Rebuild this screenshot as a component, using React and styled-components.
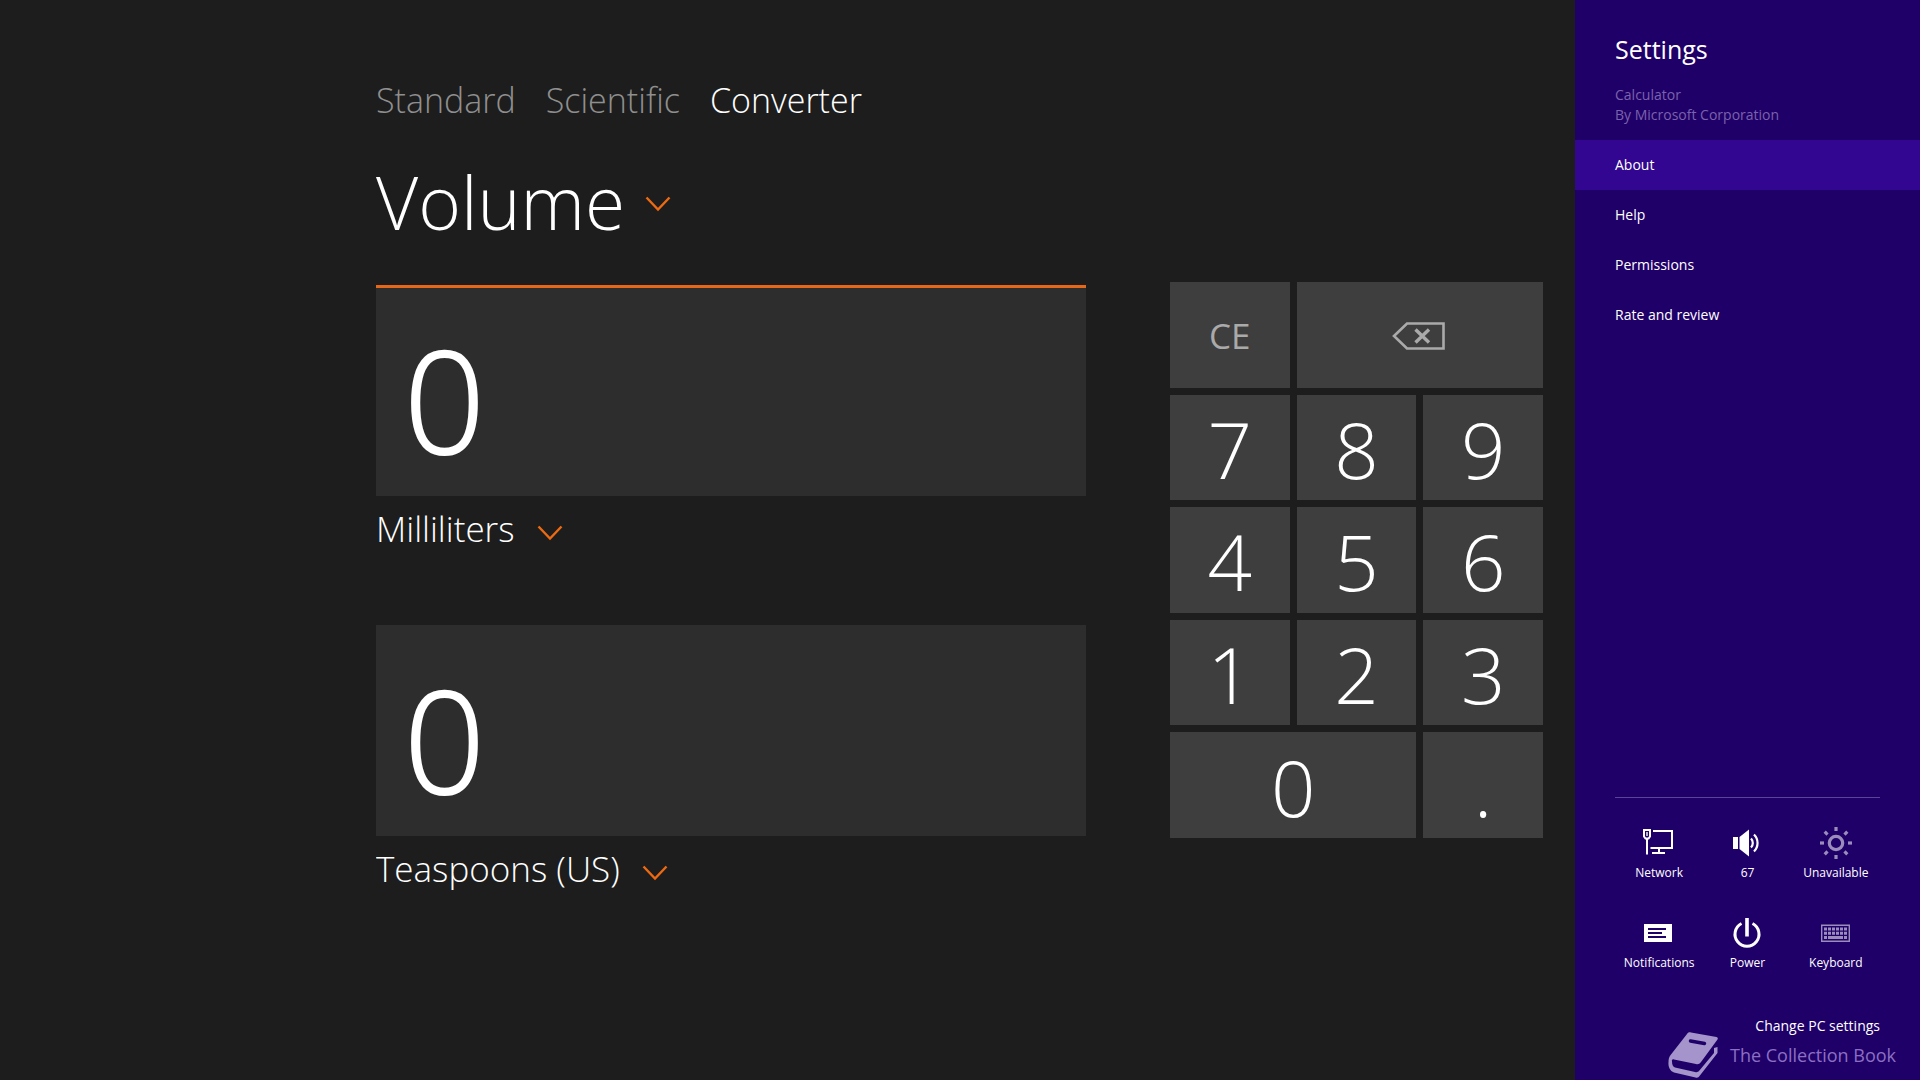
import React, { useState } from 'react'
import styled, { createGlobalStyle } from 'styled-components'

const GlobalStyle = createGlobalStyle`
  * {
    box-sizing: border-box;
  }
  body {
    margin: 0;
    background-color: #1d1d1d;
    color: #fff;
    font-family: "Open Sans", "Noto Sans", sans-serif;
  }
  button, input, select {
    font-family: inherit;
    color: inherit;
    border: none;
    border-radius: 0;
    outline: 0;
    padding: 0;
    margin: 0;
  }
`

const Page = styled.div`
  display: flex;
  min-height: 100vh;
`

const Main = styled.main`
  flex: 1;
  min-width: 0;
  padding: 76px 32px 40px 376px;
`

const Tabs = styled.nav`
  display: flex;
  gap: 30px;
  margin-bottom: 30px;
`

const Tab = styled.button`
  background: none;
  color: ${props => props.$active ? "#fff" : "#8f8f8f"};
  font-size: 34px;
  font-weight: 300;
  line-height: 48px;
  cursor: pointer;
`

const Picker = styled.label`
  display: flex;
  align-items: center;
  gap: ${props => props.$large ? "20px" : "22px"};
  height: ${props => props.$large ? "96px" : "66px"};
  svg {
    margin-top: ${props => props.$large ? "4px" : "8px"};
  }
`

const Select = styled.select`
  appearance: none;
  field-sizing: content;
  background: none;
  font-size: ${props => props.$large ? "73px" : "35px"};
  font-weight: 300;
  line-height: ${props => props.$large ? "96px" : "48px"};
  cursor: pointer;
  option {
    background-color: #2d2d2d;
    font-size: 20px;
  }
`

const Workspace = styled.div`
  display: flex;
  align-items: flex-start;
  gap: 84px;
  margin-top: 32px;
`

const Fields = styled.div`
  flex: 1;
  min-width: 0;
  padding-top: 3px;
`

const Field = styled.div`
  margin-bottom: 63px;
`

const Display = styled.input`
  display: block;
  width: 100%;
  height: 211px;
  padding: 14px 24px 0 28px;
  background-color: #2d2d2d;
  border-top: 3px solid ${props => props.$active ? "#e5671a" : "#2d2d2d"};
  font-size: 142px;
  font-weight: 300;
  -webkit-text-stroke: 2px #fff;
`

const Keypad = styled.div`
  display: grid;
  flex: none;
  width: 373px;
  height: 556px;
  grid-template-columns: repeat(3, 1fr);
  grid-template-rows: repeat(5, 1fr);
  gap: 7px;
`

const Key = styled.button`
  display: flex;
  align-items: center;
  justify-content: center;
  grid-column: span ${props => props.$span || 1};
  padding-top: 3px;
  background-color: #3e3e3e;
  color: ${props => props.$command ? "#aaa" : "#fff"};
  font-size: ${props => props.$command ? "35px" : "78px"};
  font-weight: ${props => props.$command ? 400 : 300};
  line-height: 96px;
  cursor: pointer;
`

const Panel = styled.aside`
  position: relative;
  display: flex;
  flex-direction: column;
  flex: none;
  width: 345px;
  padding-bottom: 42px;
  background-color: #1f0068;
`

const PanelTitle = styled.h1`
  margin: 30px 40px 17px;
  font-size: 25px;
  font-weight: 400;
  line-height: 38px;
`

const AppInfo = styled.p`
  margin: 0 40px 15px;
  color: #7b62ad;
  font-size: 14px;
  line-height: 20px;
`

const MenuItem = styled.button`
  height: 50px;
  padding: 0 40px 2px;
  background-color: ${props => props.$active ? "#320691" : "transparent"};
  font-size: 14px;
  text-align: left;
  cursor: pointer;
`

const Tiles = styled.div`
  display: grid;
  grid-template-columns: repeat(3, 1fr);
  margin: auto 40px 11px;
  padding-top: 25px;
  border-top: 1px solid #5a449a;
`

const Tile = styled.button`
  display: flex;
  flex-direction: column;
  align-items: center;
  height: 90px;
  background: none;
  font-size: 12px;
  line-height: 20px;
  white-space: nowrap;
  cursor: pointer;
  svg {
    flex: none;
    opacity: ${props => props.$dim ? 0.55 : 1};
  }
`

const PanelLink = styled.a`
  align-self: flex-end;
  margin-right: 40px;
  color: #fff;
  font-size: 14px;
  line-height: 24px;
  text-decoration: none;
`

const Watermark = styled.div`
  position: absolute;
  right: 24px;
  bottom: 1px;
  display: flex;
  align-items: center;
  gap: 12px;
  color: #8b6fc4;
  font-size: 18px;
  line-height: 48px;
  white-space: nowrap;
  pointer-events: none;
`

const Chevron = () => (
  <svg width="26" height="18" viewBox="0 0 26 18" fill="none" stroke="#ec6a12" strokeWidth="2.4">
    <path d="M1.5 2.5L13 14.500L24.5 2.5" />
  </svg>
)

const BackspaceIcon = () => (
  <svg width="56" height="30" viewBox="0 0 56 30" fill="none" stroke="#aaa">
    <path d="M2 15L15 2.500H51.500V27.500H15Z" strokeWidth="2.600" />
    <path d="M23.500 8.500L37 21.500M37 8.500L23.500 21.500" strokeWidth="3.400" />
  </svg>
)

const NetworkIcon = () => (
  <svg width="40" height="40" viewBox="0 0 40 40" fill="none" stroke="#fff" strokeWidth="2">
    <path d="M14 8H33V25H11.500M20 25V30M13 30H26M8 16V31.500" />
    <path d="M5 7H11V13.500L9.500 15.500H6.500L5 13.500Z" />
    <path d="M8 9V13" strokeWidth="1.400" />
  </svg>
)

const VolumeIcon = () => (
  <svg width="40" height="40" viewBox="0 0 40 40" fill="#fff">
    <path d="M6 14H11V26H6ZM12.500 14L22 6.500V33.500L12.500 26Z" />
    <path d="M24 15.500A6.500 6.500 0 0 1 24 24.500M27 11.500A12 12 0 0 1 27 28.500" fill="none" stroke="#fff" strokeWidth="2.200" />
  </svg>
)

const BrightnessIcon = () => (
  <svg width="40" height="40" viewBox="0 0 40 40" fill="none" stroke="#fff" strokeWidth="3.200">
    <circle cx="20" cy="20" r="6.700" />
    {[0, 45, 90, 135, 180, 225, 270, 315].map(angle => (
      <path key={angle} d="M20 4V8" transform={`rotate(${angle} 20 20)`} />
    ))}
  </svg>
)

const NotificationsIcon = () => (
  <svg width="40" height="40" viewBox="0 0 40 40">
    <path d="M5 11H33V29H5Z" fill="#fff" />
    <path d="M9 16H27M9 20H23M9 24H27" stroke="#1f0068" strokeWidth="2" />
  </svg>
)

const PowerIcon = () => (
  <svg width="40" height="40" viewBox="0 0 40 40" fill="none" stroke="#fff" strokeWidth="3">
    <path d="M14.500 10.500A12 12 0 1 0 25.500 10.500" />
    <path d="M20 5V23.500" strokeWidth="3.600" />
  </svg>
)

const KeyboardIcon = () => (
  <svg width="40" height="40" viewBox="0 0 40 40" fill="#fff">
    <path d="M5.700 12.200H33.300V28.300H5.700Z" fill="none" stroke="#fff" strokeWidth="1.400" />
    {[0, 1, 2, 3, 4, 5].map(col => (
      <path key={col} d={`M${8 + col * 4} 14.500h3v3h-3ZM${8 + col * 4} 18.700h3v3h-3Z`} />
    ))}
    <path d="M8 23H11V26H8ZM12 23H27V26H12ZM28 23H31V26H28Z" />
  </svg>
)

const BookIcon = () => (
  <svg width="50" height="48" viewBox="0 0 50 48">
    <path d="M23 1.500L48.500 6C50 6.500 50 7.500 49.500 8.500L33 31C31.500 33 30 33.500 28 33L6 28.500C4.500 28 3.500 29 4 30.500C4 34 5 35.500 7 36.500L27 41C29 41.500 30 41 31 40L46 22V17L49.500 16V22L31.500 45C30.500 46.500 29.500 47 27.500 46.500L6 41.500C2 40 0 36 0.500 31C0.500 28 1 26 3 23.500L19 3C20 1.500 21 1 23 1.500Z" fill="#a594cb" />
    <path d="M22.500 10L36.500 12.500" stroke="#1f0068" strokeWidth="3.500" strokeLinecap="round" />
  </svg>
)

const modes = ["Standard", "Scientific", "Converter"]
const quantities = ["Volume", "Length", "Weight", "Temperature", "Energy", "Area", "Speed", "Time"]
const units = ["Milliliters", "Liters", "Teaspoons (US)", "Tablespoons (US)", "Cups (US)", "Gallons (US)"]
const digits = ["7", "8", "9", "4", "5", "6", "1", "2", "3"]
const menu = ["About", "Help", "Permissions", "Rate and review"]

const tiles = [
  { label: "Network", icon: NetworkIcon },
  { label: "67", icon: VolumeIcon },
  { label: "Unavailable", icon: BrightnessIcon, dim: true },
  { label: "Notifications", icon: NotificationsIcon },
  { label: "Power", icon: PowerIcon },
  { label: "Keyboard", icon: KeyboardIcon, dim: true },
]

const Dropdown = ({ label, options, initial, large }) => (
  <Picker $large={large}>
    <Select aria-label={label} defaultValue={initial} $large={large}>
      {options.map(option => <option key={option}>{option}</option>)}
    </Select>
    <Chevron />
  </Picker>
)

const App = () => {
  const [value, setValue] = useState("0")

  const press = (key) => {
    if (key === "." && value.includes(".")) return
    setValue(value === "0" && key !== "." ? key : value + key)
  }

  return (
    <Page>
      <GlobalStyle />
      <Main>
        <Tabs>
          {modes.map(mode => (
            <Tab key={mode} type="button" $active={mode === "Converter"}>{mode}</Tab>
          ))}
        </Tabs>
        <Dropdown label="Quantity" options={quantities} initial="Volume" large />
        <Workspace>
          <Fields>
            <Field>
              <Display aria-label="From" value={value} readOnly $active />
              <Dropdown label="From unit" options={units} initial="Milliliters" />
            </Field>
            <Field>
              <Display aria-label="To" value="0" readOnly />
              <Dropdown label="To unit" options={units} initial="Teaspoons (US)" />
            </Field>
          </Fields>
          <Keypad>
            <Key type="button" $command onClick={() => setValue("0")}>CE</Key>
            <Key
              type="button"
              aria-label="Backspace"
              $command
              $span={2}
              onClick={() => setValue(value.slice(0, -1) || "0")}
            >
              <BackspaceIcon />
            </Key>
            {digits.map(digit => (
              <Key key={digit} type="button" onClick={() => press(digit)}>{digit}</Key>
            ))}
            <Key type="button" $span={2} onClick={() => press("0")}>0</Key>
            <Key type="button" onClick={() => press(".")}>.</Key>
          </Keypad>
        </Workspace>
      </Main>
      <Panel>
        <PanelTitle>Settings</PanelTitle>
        <AppInfo>
          Calculator<br />
          By Microsoft Corporation
        </AppInfo>
        {menu.map(item => (
          <MenuItem key={item} type="button" $active={item === "About"}>{item}</MenuItem>
        ))}
        <Tiles>
          {tiles.map(({ label, icon: Icon, dim }) => (
            <Tile key={label} type="button" $dim={dim}>
              <Icon />
              {label}
            </Tile>
          ))}
        </Tiles>
        <PanelLink href="#settings">Change PC settings</PanelLink>
        <Watermark>
          <BookIcon />
          The Collection Book
        </Watermark>
      </Panel>
    </Page>
  )
}

export default App
